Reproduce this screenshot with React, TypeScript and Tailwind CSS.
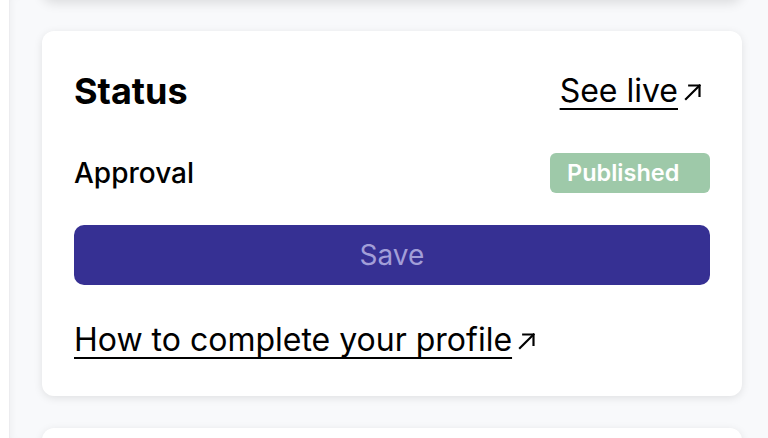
import React from "react";

const Arrow = ({ className }: { className?: string }) => (
  <svg viewBox="0 0 24 24" className={className} fill="none" stroke="currentColor" strokeWidth={2} strokeLinecap="square">
    <path d="M5.5 18.5 L18 6" />
    <path d="M8.5 6 H18 V15.5" />
  </svg>
);

export default function App() {
  return (
    <div className="flex h-[438px] w-[768px] overflow-hidden bg-white" style={{ fontFamily: "Inter, 'Noto Sans', sans-serif" }}>
      <div className="w-[10px] shrink-0 bg-white border-r border-[#ececef]" />
      <div className="flex-1 bg-[#f8f9fb] pl-[32px] shadow-[inset_6px_0_8px_-6px_rgba(0,0,0,0.06)]">
        <div className="mt-[-101px] flex w-[700px] flex-col gap-8">
          <div className="h-[100px] rounded-xl bg-white shadow-[0_4px_12px_rgba(0,0,0,0.12)]" />
          <div className="flex flex-col rounded-xl bg-white px-8 pt-[35px] pb-[34px] shadow-[0_2px_8px_rgba(0,0,0,0.1)]">
            <div className="flex h-[50px] items-center justify-between">
              <h2 className="text-[36px] font-bold leading-[50px] text-black">Status</h2>
              <a className="mr-[4px] flex items-center gap-[2px] text-[32px] leading-[50px] text-black">
                <span className="underline decoration-2 underline-offset-[6px] [text-decoration-skip-ink:none]">See live</span>
                <Arrow className="mt-[2px] h-[26px] w-[26px]" />
              </a>
            </div>
            <div className="mt-[37px] flex h-[40px] items-center justify-between">
              <span className="text-[28px] font-medium text-black">Approval</span>
              <span className="flex h-[40px] w-[160px] items-center rounded-[6px] bg-[#9ec9a9] pl-[17px] text-[23.5px] font-semibold text-white">
                Published
              </span>
            </div>
            <button className="mt-[32px] flex h-[60px] w-full items-center justify-center rounded-[10px] bg-[#363093] text-[28px] text-[#a29ed8]">
              Save
            </button>
            <a className="mt-[33px] flex h-[44px] items-center gap-[2px] text-[32px] leading-[44px] text-black">
              <span className="underline decoration-2 underline-offset-[6px] [text-decoration-skip-ink:none]">How to complete your profile</span>
              <Arrow className="mt-[2px] h-[26px] w-[26px]" />
            </a>
          </div>
          <div className="h-[100px] rounded-xl bg-white shadow-[0_2px_8px_rgba(0,0,0,0.1)]" />
        </div>
      </div>
    </div>
  );
}
